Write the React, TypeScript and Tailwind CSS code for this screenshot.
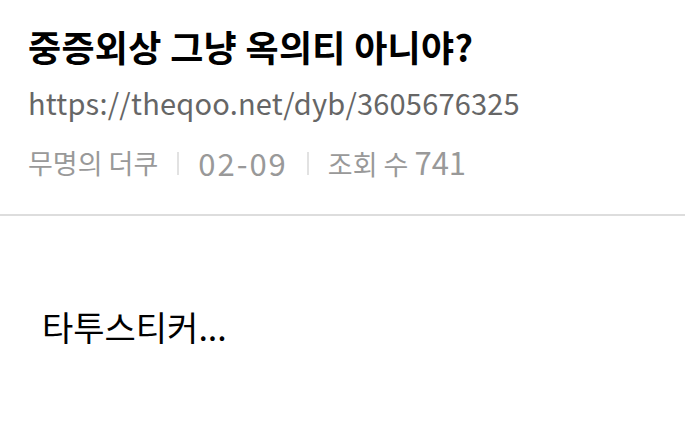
export default function App() {
  const ko = { fontFamily: '"Noto Sans CJK KR", "Noto Sans", sans-serif' };
  return (
    <div className="w-[685px] h-[426px] bg-white overflow-hidden" style={ko}>
      <div className="px-[28px] pt-[20px] pb-[30px]">
        <div className="text-[36px] font-bold text-black leading-[52px] tracking-[0.3px]">중증외상 그냥 옥의티 아니야?</div>
        <div className="text-[29px] text-[#666] leading-[40px] mt-[10px] tracking-[0.2px]">https://theqoo.net/dyb/3605676325</div>
        <div className="flex items-center text-[27px] text-[#999] leading-[40px] mt-[20px]">
          <span>무명의 더쿠</span>
          <span className="w-[2px] h-[23px] bg-[#e2e2e2] mx-[19px]" />
          <span className="text-[31px] tracking-[2px]">02-09</span>
          <span className="w-[2px] h-[23px] bg-[#e2e2e2] ml-[19px] mr-[19px]" />
          <span>조회 수 <span className="text-[31px]">741</span></span>
        </div>
      </div>
      <div className="h-[2px] bg-[#ddd]" />
      <div className="px-[42px] pt-[87px] text-[34px] text-black leading-[48px]">타투스티커...</div>
    </div>
  );
}
